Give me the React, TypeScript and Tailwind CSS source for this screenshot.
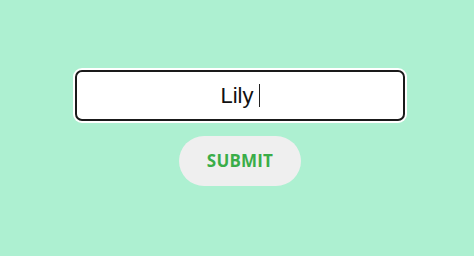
export default function App() {
  return (
    <div className="w-[474px] h-[256px] bg-[#adf0d1] flex flex-col items-center pt-[68px] pl-[6px]" style={{ fontFamily: '"Liberation Sans", Arial, sans-serif' }}>
      <div className="w-[334px] h-[55px] rounded-[9px] bg-white p-[2px]">
        <div className="w-full h-full rounded-[7px] border-[2.5px] border-[#1a1a1a] bg-white flex items-center justify-center">
          <span className="text-[22px] text-[#111] leading-none">Lily&nbsp;</span>
          <span className="w-[1px] h-[23px] bg-[#222] -ml-[1px]"></span>
        </div>
      </div>
      <button className="mt-[13px] w-[122px] h-[50px] rounded-full bg-[#efefef] text-[#3aad48] text-[17px] font-bold tracking-[0.2px]" style={{ fontFamily: '"Open Sans", sans-serif' }}>
        SUBMIT
      </button>
    </div>
  );
}
